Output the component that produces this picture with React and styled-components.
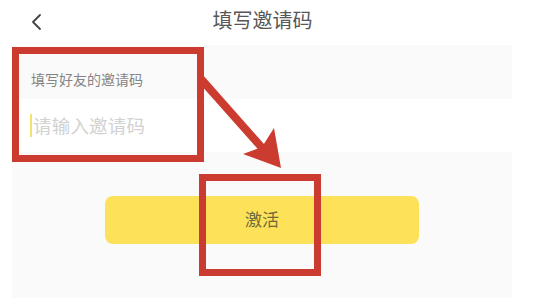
import styled, { createGlobalStyle } from "styled-components";

const GlobalStyle = createGlobalStyle`
  html, body {
    margin: 0;
    padding: 0;
    background: #fff;
  }
  body {
    font-family: "Noto Sans CJK SC", "Noto Sans", sans-serif;
  }
`

const Page = styled.div`
  position: relative;
  width: 540px;
  height: 298px;
  overflow: hidden;
  background: #fff;
`

const Screen = styled.div`
  margin-left: 12px;
  width: 500px;
  height: 298px;
  display: flex;
  flex-direction: column;
`

const NavBar = styled.div`
  height: 45px;
  display: flex;
  align-items: center;
  justify-content: center;
  position: relative;
  background: #fff;
`

const BackButton = styled.button`
  position: absolute;
  left: 17px;
  top: 13px;
  padding: 0;
  border: none;
  background: transparent;
  display: flex;
`

const Title = styled.div`
  font-size: 20px;
  line-height: 24px;
  color: #575757;
  margin-left: 1px;
  margin-top: -6px;
`

const LabelRow = styled.div`
  height: 54px;
  background: #fafafa;
  display: flex;
  align-items: center;
  padding-left: 19px;
  padding-top: 14px;
  box-sizing: border-box;
  font-size: 14px;
  color: #858585;
`

const InputRow = styled.div`
  height: 53px;
  background: #fff;
  display: flex;
  align-items: center;
  padding-left: 18px;
  box-sizing: border-box;
`

const Caret = styled.span`
  width: 2px;
  height: 23px;
  background: #f3e36a;
  margin-right: 1px;
`

const Placeholder = styled.span`
  font-size: 18.5px;
  color: #d2d2d2;
  letter-spacing: 0.2px;
  margin-top: -2px;
`

const Body = styled.div`
  flex: 1;
  background: #fafafa;
  padding-top: 44px;
`

const ActivateButton = styled.button`
  display: flex;
  align-items: center;
  justify-content: center;
  margin-left: 93px;
  width: 314px;
  height: 48px;
  border: none;
  border-radius: 8px;
  background: #fde259;
  font-family: inherit;
  font-size: 17px;
  color: #6e6a3c;
  padding: 0 0 4px;
`

const Annotation = styled.div`
  position: absolute;
  left: ${p => p.$x}px;
  top: ${p => p.$y}px;
  width: ${p => p.$w}px;
  height: ${p => p.$h}px;
  border: 7px solid #cc3b30;
  box-sizing: border-box;
  pointer-events: none;
`

const ArrowLayer = styled.svg`
  position: absolute;
  left: 0;
  top: 0;
  pointer-events: none;
`

export default function App() {
    return <Page>
        <GlobalStyle/>
        <Screen>
            <NavBar>
                <BackButton>
                    <svg width="14" height="18" viewBox="0 0 14 18">
                        <path d="M11 2 L4 9 L11 16" fill="none" stroke="#444" strokeWidth="1.8" strokeLinecap="round" strokeLinejoin="round"/>
                    </svg>
                </BackButton>
                <Title>填写邀请码</Title>
            </NavBar>
            <LabelRow>填写好友的邀请码</LabelRow>
            <InputRow>
                <Caret/>
                <Placeholder>请输入邀请码</Placeholder>
            </InputRow>
            <Body>
                <ActivateButton>激活</ActivateButton>
            </Body>
        </Screen>

        {/* red markup drawn over the screenshot */}
        <Annotation $x={12} $y={47} $w={192} $h={115}/>
        <Annotation $x={199} $y={174} $w={122} $h={102}/>
        <ArrowLayer width="540" height="298" viewBox="0 0 540 298">
            <line x1="201" y1="79" x2="271" y2="158" stroke="#cc3b30" strokeWidth="8"/>
            <path d="M281 168 L243 154 L262 147 L274 128 Z" fill="#cc3b30"/>
        </ArrowLayer>
    </Page>
}
